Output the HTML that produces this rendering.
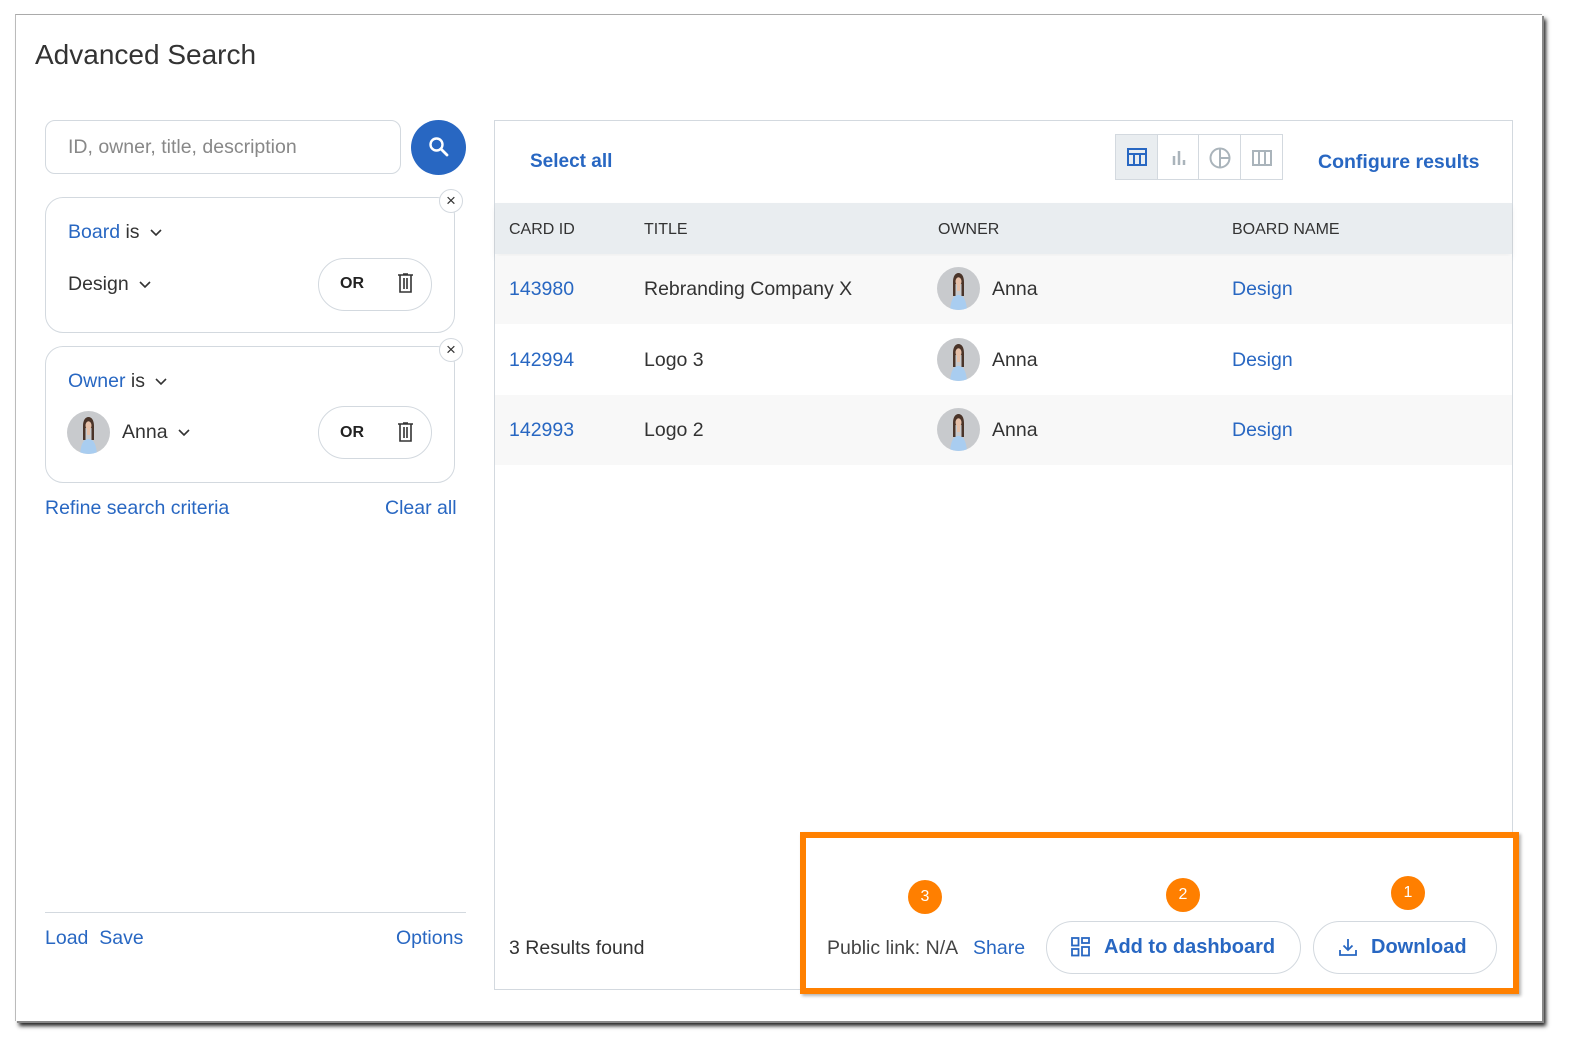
<!DOCTYPE html>
<html><head><meta charset="utf-8"><style>
*{box-sizing:border-box;margin:0;padding:0}
body{width:1585px;height:1058px;background:#fff;position:relative;overflow:hidden;font-family:"Liberation Sans",sans-serif;color:#333}
.a{position:absolute;white-space:nowrap}
.blue{color:#2867c2}
.win{position:absolute;left:15px;top:14px;width:1527px;height:1007px;background:#fff;box-shadow:2px 2px 0 #888,4px 5px 4px #222;border-top:1px solid #aaa;border-left:1px solid #bbb}
.t{font-size:19.5px;line-height:1}
.card{position:absolute;left:45px;width:410px;border:1px solid #d3d9df;border-radius:18px}
.xc{position:absolute;width:24px;height:24px;border-radius:50%;border:1px solid #d3d9df;background:#fff;text-align:center;line-height:21px;font-size:17px;color:#333}
.pill{position:absolute;left:318px;width:114px;height:53px;border:1px solid #d3d9df;border-radius:27px}
.hd{font-size:16px;color:#333}
.badge{position:absolute;width:34px;height:34px;border-radius:50%;background:#ff7f00;color:#fff;font-size:16px;text-align:center;line-height:34px}
.btn{position:absolute;top:921px;height:53px;border:1px solid #d3d9df;border-radius:27px;font-size:20px;font-weight:bold;color:#2867c2;line-height:51px}
.ch{display:inline-block;margin-left:10px;vertical-align:middle}
</style></head><body>
<svg width="0" height="0" style="position:absolute"><defs><clipPath id="c1"><circle cx="21.5" cy="21.5" r="21.5"/></clipPath>
<g id="av"><g clip-path="url(#c1)"><rect width="43" height="43" fill="#c8cacd"/><path d="M13 43c1-11 4-15 8.5-15S29 32 30 43z" fill="#a9cdf0"/><path d="M16 15c0-6 2.5-9 5.5-9s5.5 3 5.5 9v14h-2.5V17h-6v12H16z" fill="#4a3429"/><ellipse cx="21.5" cy="14.5" rx="3" ry="4.3" fill="#e6c0a8"/><rect x="20" y="18" width="3" height="6" fill="#e6c0a8"/></g></g>
<path id="chv" d="M1 1l5 5 5-5" stroke="#333" stroke-width="1.6" fill="none"/>
<g id="trash"><path d="M1 2h15M6 1h5M3 2v17h11V2M7 5v11M10 5v11" stroke="#333" stroke-width="1.6" fill="none"/></g>
</defs></svg>
<div class="win"></div>
<div class="a" style="left:35px;top:39px;font-size:28px;color:#333">Advanced Search</div>

<div class="a" style="left:45px;top:120px;width:356px;height:54px;border:1px solid #d3d9df;border-radius:10px"></div>
<div class="a t" style="left:68px;top:138px;color:#888">ID, owner, title, description</div>
<div class="a" style="left:411px;top:120px;width:55px;height:55px;border-radius:50%;background:#2867c2"></div>
<svg class="a" style="left:427px;top:135px" width="24" height="24" viewBox="0 0 24 24"><circle cx="9.5" cy="9.5" r="6" stroke="#fff" stroke-width="2.4" fill="none"/><path d="M14 14l6 6" stroke="#fff" stroke-width="2.8" stroke-linecap="round"/></svg>

<div class="card" style="top:197px;height:136px"></div>
<div class="xc a" style="left:439px;top:189px">×</div>
<div class="a t" style="left:68px;top:223px"><span class="blue">Board</span> is<svg class="ch" width="12" height="8"><use href="#chv"/></svg></div>
<div class="a t" style="left:68px;top:275px">Design<svg class="ch" width="12" height="8"><use href="#chv"/></svg></div>
<div class="pill" style="top:258px"></div>
<div class="a" style="left:340px;top:275px;font-size:16px;font-weight:bold;color:#222">OR</div>
<svg class="a" style="left:397px;top:273px" width="17" height="20"><use href="#trash"/></svg>

<div class="card" style="top:346px;height:137px"></div>
<div class="xc a" style="left:439px;top:338px">×</div>
<div class="a t" style="left:68px;top:372px"><span class="blue">Owner</span> is<svg class="ch" width="12" height="8"><use href="#chv"/></svg></div>
<svg class="a" style="left:67px;top:411px" width="43" height="43"><use href="#av"/></svg>
<div class="a t" style="left:122px;top:423px">Anna<svg class="ch" width="12" height="8"><use href="#chv"/></svg></div>
<div class="pill" style="top:406px"></div>
<div class="a" style="left:340px;top:424px;font-size:16px;font-weight:bold;color:#222">OR</div>
<svg class="a" style="left:397px;top:422px" width="17" height="20"><use href="#trash"/></svg>

<div class="a t blue" style="left:45px;top:499px">Refine search criteria</div>
<div class="a t blue" style="left:385px;top:499px">Clear all</div>
<div class="a" style="left:45px;top:912px;width:421px;height:1px;background:#d3d9df"></div>
<div class="a t blue" style="left:45px;top:929px">Load&nbsp; Save</div>
<div class="a t blue" style="left:396px;top:929px">Options</div>

<div class="a" style="left:494px;top:120px;width:1019px;height:870px;border:1px solid #d3d9df"></div>
<div class="a blue" style="left:530px;top:151px;font-size:19px;font-weight:bold">Select all</div>
<div class="a" style="left:1115px;top:134px;width:168px;height:46px;border:1px solid #d3d9df;display:flex">
<div style="width:42px;background:#e9edf0;border-right:1px solid #d3d9df;position:relative"><svg style="position:absolute;left:11px;top:13px" width="20" height="18"><rect x="1" y="1" width="18" height="16" fill="none" stroke="#2867c2" stroke-width="2"/><path d="M1 6h18M7 6v11M13 6v11" stroke="#2867c2" stroke-width="2"/></svg></div>
<div style="width:42px;border-right:1px solid #d3d9df;position:relative"><svg style="position:absolute;left:13px;top:14px" width="16" height="16"><path d="M3 7v9M8 2v14M13 11v5" stroke="#aab4bb" stroke-width="2.5"/></svg></div>
<div style="width:42px;border-right:1px solid #d3d9df;position:relative"><svg style="position:absolute;left:10px;top:12px" width="22" height="22"><circle cx="11" cy="11" r="9.5" fill="none" stroke="#aab4bb" stroke-width="2"/><path d="M11 1.5V20.5M11 11h9.5" stroke="#aab4bb" stroke-width="2"/></svg></div>
<div style="width:42px;position:relative"><svg style="position:absolute;left:11px;top:15px" width="20" height="16"><rect x="1" y="1" width="18" height="14" fill="none" stroke="#aab4bb" stroke-width="2"/><path d="M7 1v14M13 1v14" stroke="#aab4bb" stroke-width="2"/></svg></div>
</div>
<div class="a blue" style="left:1318px;top:151px;font-size:19.5px;font-weight:bold">Configure results</div>

<div class="a" style="left:495px;top:203px;width:1017px;height:51px;background:#e9edf0;box-shadow:0 4px 6px rgba(0,0,0,.06)"></div>
<div class="a hd" style="left:509px;top:221px">CARD ID</div>
<div class="a hd" style="left:644px;top:221px">TITLE</div>
<div class="a hd" style="left:938px;top:221px">OWNER</div>
<div class="a hd" style="left:1232px;top:221px">BOARD NAME</div>

<div class="a" style="left:495px;top:256px;width:1017px;height:68px;background:#f8f8f8"></div>
<div class="a" style="left:495px;top:395px;width:1017px;height:70px;background:#f8f8f8"></div>

<div class="a t blue" style="left:509px;top:280px">143980</div>
<div class="a t" style="left:644px;top:280px">Rebranding Company X</div>
<div class="a t" style="left:992px;top:280px">Anna</div>
<div class="a t blue" style="left:1232px;top:280px">Design</div>
<div class="a t blue" style="left:509px;top:351px">142994</div>
<div class="a t" style="left:644px;top:351px">Logo 3</div>
<div class="a t" style="left:992px;top:351px">Anna</div>
<div class="a t blue" style="left:1232px;top:351px">Design</div>
<div class="a t blue" style="left:509px;top:421px">142993</div>
<div class="a t" style="left:644px;top:421px">Logo 2</div>
<div class="a t" style="left:992px;top:421px">Anna</div>
<div class="a t blue" style="left:1232px;top:421px">Design</div>

<svg class="a" style="left:937px;top:267px" width="43" height="43"><use href="#av"/></svg>
<svg class="a" style="left:937px;top:338px" width="43" height="43"><use href="#av"/></svg>
<svg class="a" style="left:937px;top:408px" width="43" height="43"><use href="#av"/></svg>

<div class="a t" style="left:509px;top:939px">3 Results found</div>

<div class="a" style="left:800px;top:832px;width:719px;height:162px;border:6px solid #ff8000;background:#fff;box-shadow:2px 2px 3px rgba(0,0,0,.3)"></div>
<div class="badge" style="left:908px;top:880px">3</div>
<div class="badge" style="left:1166px;top:878px">2</div>
<div class="badge" style="left:1391px;top:876px">1</div>
<div class="a t" style="left:827px;top:939px;color:#444">Public link: N/A</div>
<div class="a t blue" style="left:973px;top:939px">Share</div>
<div class="btn" style="left:1046px;width:255px;padding-left:57px">Add to dashboard</div>
<svg class="a" style="left:1071px;top:937px" width="20" height="20"><rect x="1" y="1" width="6.5" height="7.5" fill="none" stroke="#2867c2" stroke-width="1.8"/><rect x="11" y="1" width="7" height="5" fill="none" stroke="#2867c2" stroke-width="1.8"/><rect x="1" y="12" width="6.5" height="6.5" fill="none" stroke="#2867c2" stroke-width="1.8"/><rect x="11" y="10" width="7" height="8.5" fill="none" stroke="#2867c2" stroke-width="1.8"/></svg>
<div class="btn" style="left:1313px;width:184px;padding-left:57px">Download</div>
<svg class="a" style="left:1338px;top:937px" width="20" height="20"><path d="M10 2v11M5.5 8.5L10 13l4.5-4.5M2 13v5h16v-5" stroke="#2867c2" stroke-width="1.8" fill="none"/></svg>
</body></html>
